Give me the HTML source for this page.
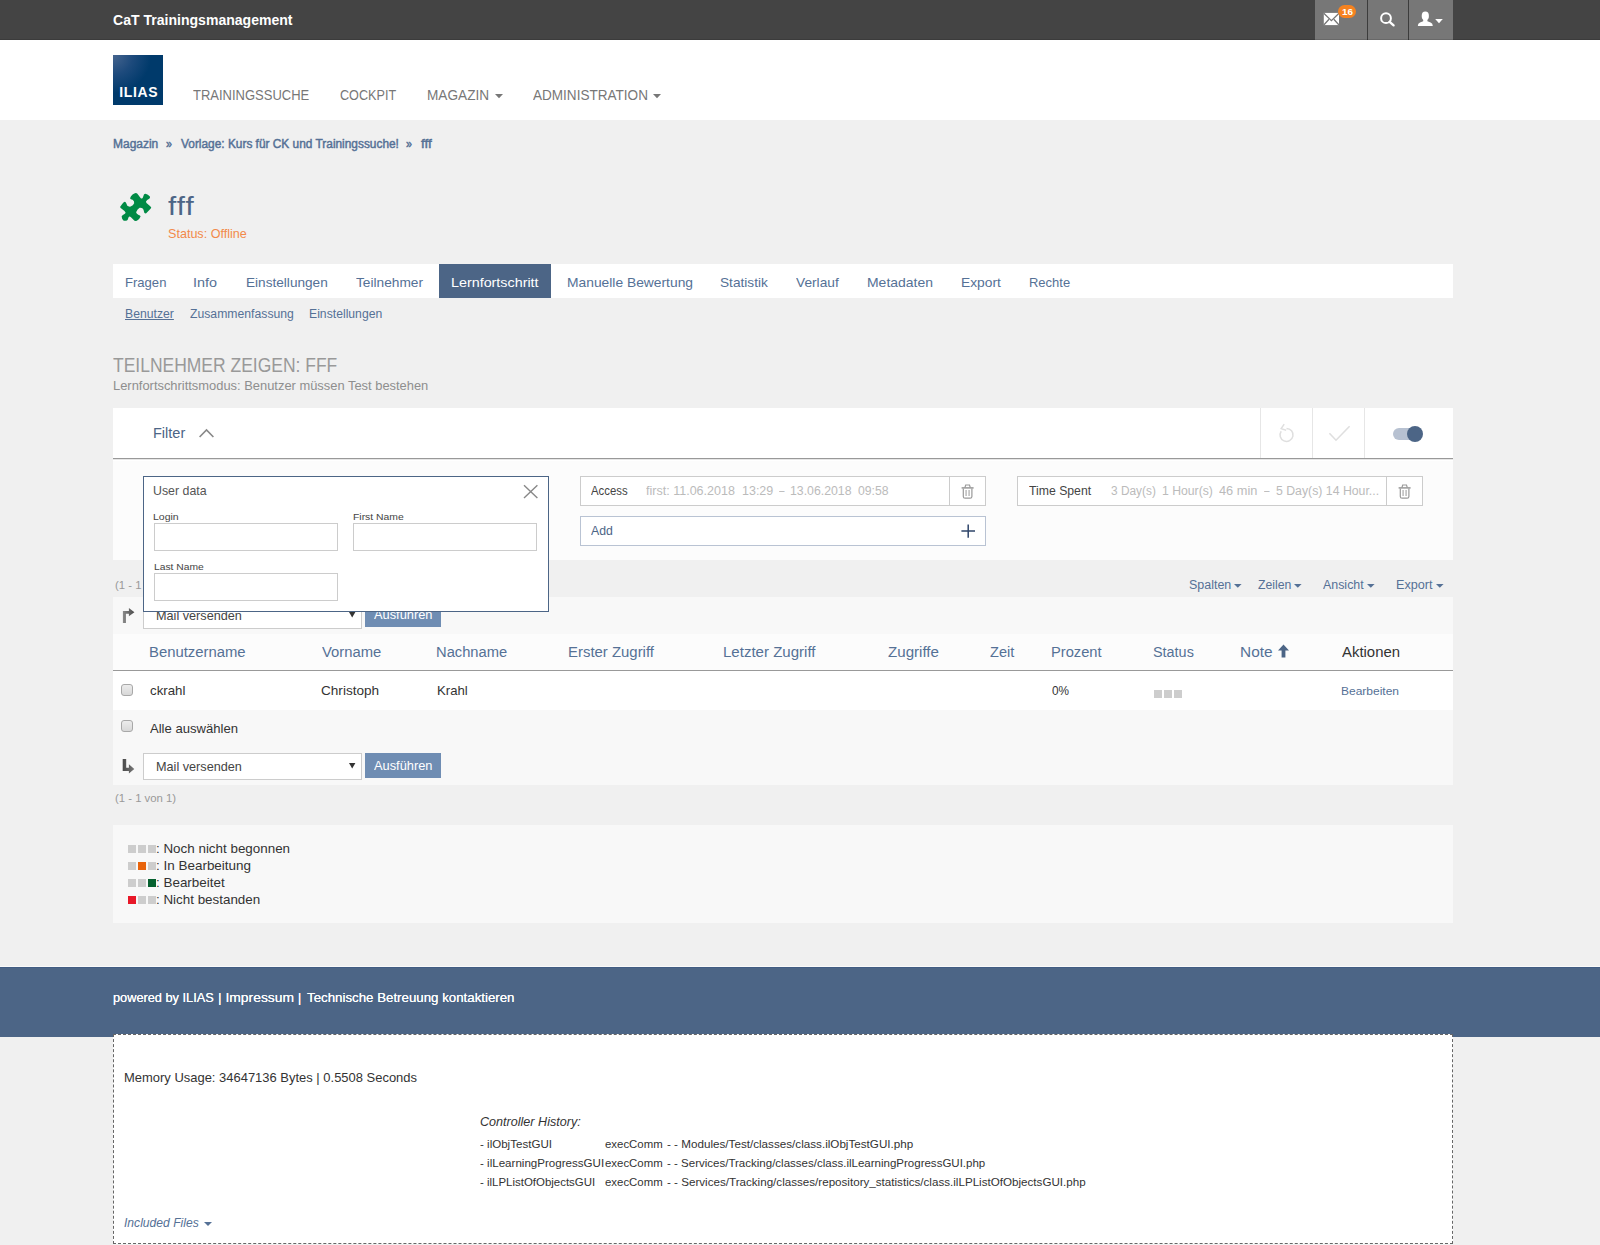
<!DOCTYPE html>
<html><head><meta charset="utf-8"><title>fff</title>
<style>
html,body{margin:0;padding:0;}
body{width:1600px;height:1245px;background:#f0f0f0;position:relative;overflow:hidden;font-family:"Liberation Sans",sans-serif;}
body>div,body>svg,body>span{position:absolute;box-sizing:border-box;}
body>span{white-space:pre;transform-origin:0 50%;z-index:1;line-height:30px;height:30px;}
</style></head><body>
<div style="left:0px;top:0px;width:1600px;height:40px;background:#444;"></div>
<div style="left:1315px;top:0px;width:138px;height:40px;background:#777;"></div>
<div style="left:1367px;top:0px;width:1px;height:40px;background:#3c3c3c;"></div>
<div style="left:1408px;top:0px;width:1px;height:40px;background:#3c3c3c;"></div>
<div style="left:0px;top:39px;width:1600px;height:1px;background:rgba(0,0,0,0.12);"></div>
<div style="left:0px;top:40px;width:1600px;height:80px;background:#fff;"></div>
<div style="left:113px;top:55px;width:50px;height:50px;background:radial-gradient(circle at 0% 0%, #46658f 0%, #1d4a7c 28%, #003a6b 54%);"></div>
<div style="left:113px;top:264px;width:1340px;height:34px;background:#fff;"></div>
<div style="left:439px;top:264px;width:112px;height:34px;background:#4c6586;"></div>
<div style="left:113px;top:408px;width:1340px;height:50px;background:#fff;"></div>
<div style="left:113px;top:458px;width:1340px;height:1px;background:#999;"></div>
<div style="left:113px;top:459px;width:1340px;height:101px;background:linear-gradient(#e6e6e6 0px,#e6e6e6 1px,#fff 1px,#fff 2px,#fcfcfc 2px);"></div>
<div style="left:1260px;top:408px;width:1px;height:50px;background:#e6e6e6;"></div>
<div style="left:1312px;top:408px;width:1px;height:50px;background:#e6e6e6;"></div>
<div style="left:1364px;top:408px;width:1px;height:50px;background:#e6e6e6;"></div>
<div style="left:580px;top:476px;width:406px;height:30px;background:#fff;border:1px solid #ccc;"></div>
<div style="left:949px;top:476px;width:1px;height:30px;background:#ccc;"></div>
<div style="left:580px;top:516px;width:406px;height:30px;background:#fff;border:1px solid #b9c3d3;"></div>
<div style="left:1017px;top:476px;width:406px;height:30px;background:#fff;border:1px solid #ccc;"></div>
<div style="left:1386px;top:476px;width:1px;height:30px;background:#ccc;"></div>
<div style="left:113px;top:597px;width:1340px;height:188px;background:#f8f8f8;"></div>
<div style="left:113px;top:634px;width:1340px;height:36px;background:#fcfcfc;"></div>
<div style="left:113px;top:670px;width:1340px;height:1px;background:#999;"></div>
<div style="left:113px;top:671px;width:1340px;height:39px;background:#fff;"></div>
<div style="left:143px;top:602px;width:219px;height:27px;background:#fff;border:1px solid #ccc;"></div>
<div style="left:365px;top:602px;width:76px;height:25px;background:#6f8db3;"></div>
<svg style="left:349px;top:612px;" width="7" height="6" viewBox="0 0 7 6"><path d="M0 0H6.4L3.2 5.6Z" fill="#333"/></svg>
<div style="left:143px;top:753px;width:219px;height:27px;background:#fff;border:1px solid #ccc;"></div>
<div style="left:365px;top:753px;width:76px;height:25px;background:#6f8db3;"></div>
<svg style="left:349px;top:763px;" width="7" height="6" viewBox="0 0 7 6"><path d="M0 0H6.4L3.2 5.6Z" fill="#333"/></svg>
<div style="left:113px;top:825px;width:1340px;height:98px;background:#f8f8f8;"></div>
<div style="left:0px;top:966px;width:1600px;height:1px;background:#fafafa;"></div>
<div style="left:0px;top:967px;width:1600px;height:70px;background:#4c6586;"></div>
<div style="left:0px;top:967px;width:1600px;height:1px;background:#415c83;"></div>
<div style="left:113px;top:1034px;width:1340px;height:210px;background:#fff;border:1px dashed #666;"></div>
<div style="left:143px;top:476px;width:406px;height:136px;background:#fff;border:1px solid #4c6586;z-index:2;"></div>
<div style="left:154px;top:523px;width:184px;height:28px;background:#fff;border:1px solid #ccc;z-index:3;"></div>
<div style="left:353px;top:523px;width:184px;height:28px;background:#fff;border:1px solid #ccc;z-index:3;"></div>
<div style="left:154px;top:573px;width:184px;height:28px;background:#fff;border:1px solid #ccc;z-index:3;"></div>
<div style="left:1154px;top:690px;width:8px;height:8px;background:#cdcdcd;"></div>
<div style="left:1164px;top:690px;width:8px;height:8px;background:#cdcdcd;"></div>
<div style="left:1174px;top:690px;width:8px;height:8px;background:#cdcdcd;"></div>
<div style="left:128px;top:845px;width:8px;height:8px;background:#cdcdcd;"></div>
<div style="left:138px;top:845px;width:8px;height:8px;background:#cdcdcd;"></div>
<div style="left:148px;top:845px;width:8px;height:8px;background:#cdcdcd;"></div>
<div style="left:128px;top:862px;width:8px;height:8px;background:#cdcdcd;"></div>
<div style="left:138px;top:862px;width:8px;height:8px;background:#e8640c;"></div>
<div style="left:148px;top:862px;width:8px;height:8px;background:#cdcdcd;"></div>
<div style="left:128px;top:879px;width:8px;height:8px;background:#cdcdcd;"></div>
<div style="left:138px;top:879px;width:8px;height:8px;background:#cdcdcd;"></div>
<div style="left:148px;top:879px;width:8px;height:8px;background:#06602f;"></div>
<div style="left:128px;top:896px;width:8px;height:8px;background:#e81828;"></div>
<div style="left:138px;top:896px;width:8px;height:8px;background:#cdcdcd;"></div>
<div style="left:148px;top:896px;width:8px;height:8px;background:#cdcdcd;"></div>
<svg style="left:112px;top:186px;" width="50" height="40" viewBox="0 0 1556 1245"><path d="M740 215 Q770 215 790 240 L895 385 Q920 400 955 370 L995 265 Q1010 240 1045 240 Q1120 255 1180 330 Q1195 380 1160 400 Q1080 430 1058 480 Q1060 530 1110 560 Q1180 610 1220 665 Q1220 690 1200 705 L1065 850 Q1035 865 1005 830 Q985 740 965 710 Q920 670 860 678 Q790 720 750 820 Q760 870 830 900 Q880 910 890 950 Q860 1030 775 1085 Q735 1095 700 1085 L590 970 Q545 930 520 965 L485 1055 Q440 1090 365 1082 Q300 1020 300 950 Q305 915 340 900 Q420 860 425 830 Q400 780 330 730 Q250 680 250 650 Q300 570 365 505 Q405 480 430 510 Q460 560 470 610 Q510 650 580 640 Q660 610 690 540 Q700 470 640 430 Q570 410 562 380 Q580 320 640 265 Q700 220 740 215 Z" fill="#008a45"/></svg>
<svg style="left:1323px;top:12px;" width="17" height="14" viewBox="0 0 17 14"><rect x="0.8" y="0.9" width="15.2" height="12.2" fill="#fff"/><path d="M0.8 1.2 L8.4 8.6 L16 1.2" fill="none" stroke="#777" stroke-width="1.3"/><path d="M0.8 13 L6 7.2 M16 13 L10.8 7.2" fill="none" stroke="#777" stroke-width="1.3"/></svg>
<div style="left:1338px;top:5px;width:18px;height:13px;background:#f58220;border-radius:6.5px;"></div>
<svg style="left:1379px;top:11px;" width="18" height="17" viewBox="0 0 18 17"><circle cx="7" cy="7.2" r="4.9" fill="none" stroke="#fff" stroke-width="2"/><path d="M10.6 10.8 L14.6 14.4" stroke="#fff" stroke-width="2.3" stroke-linecap="round"/></svg>
<svg style="left:1417px;top:11px;" width="17" height="16" viewBox="0 0 17 16"><ellipse cx="8.3" cy="5" rx="3.6" ry="4.4" fill="#fff"/><path d="M0.8 15 Q0.8 12.3 3 11.6 L6.2 10.2 L6.2 8 H10.4 V10.2 L13.6 11.6 Q15.8 12.3 15.8 15 Z" fill="#fff"/></svg>
<svg style="left:1435px;top:18.6px;" width="9" height="5" viewBox="0 0 9 5"><path d="M0.2 0H7.8L4 4.3Z" fill="#fff"/></svg>
<svg style="left:495.2px;top:94px;" width="9" height="5" viewBox="0 0 9 5"><path d="M0 0H8L4 4.2Z" fill="#777"/></svg>
<svg style="left:653px;top:94px;" width="9" height="5" viewBox="0 0 9 5"><path d="M0 0H8L4 4.2Z" fill="#777"/></svg>
<svg style="left:1234.25px;top:584.2px;" width="9" height="5" viewBox="0 0 9 5"><path d="M0 0H7.6L3.8 3.7Z" fill="#557196"/></svg>
<svg style="left:1294.25px;top:584.2px;" width="9" height="5" viewBox="0 0 9 5"><path d="M0 0H7.6L3.8 3.7Z" fill="#557196"/></svg>
<svg style="left:1367px;top:584.2px;" width="9" height="5" viewBox="0 0 9 5"><path d="M0 0H7.6L3.8 3.7Z" fill="#557196"/></svg>
<svg style="left:1435.5px;top:584.2px;" width="9" height="5" viewBox="0 0 9 5"><path d="M0 0H7.6L3.8 3.7Z" fill="#557196"/></svg>
<svg style="left:203.75px;top:1221.6px;" width="9" height="5" viewBox="0 0 9 5"><path d="M0 0H8L4 4Z" fill="#557196"/></svg>
<svg style="left:198px;top:427px;" width="18" height="13" viewBox="0 0 18 13"><path d="M1.6 10 L8.5 3 L15.4 10" fill="none" stroke="#888" stroke-width="1.6"/></svg>
<svg style="left:1276px;top:422px;" width="20" height="22" viewBox="0 0 20 22"><path d="M5.2 9.2 A6.5 6.5 0 1 0 10.5 6.4" fill="none" stroke="#dfdfdf" stroke-width="1.5"/><path d="M8.2 2.2 L5.2 6.6 L10.2 8.2" fill="none" stroke="#dfdfdf" stroke-width="1.5"/></svg>
<svg style="left:1327px;top:424px;" width="26" height="20" viewBox="0 0 26 20"><path d="M2.4 9.2 L9 16.2 L22.6 2.2" fill="none" stroke="#dfdfdf" stroke-width="1.6"/></svg>
<div style="left:1393px;top:428px;width:28px;height:12px;background:#b7c1d1;border-radius:6px;"></div>
<div style="left:1407px;top:426px;width:16px;height:16px;background:#4c6586;border-radius:8px;"></div>
<svg style="left:961px;top:484px;" width="14" height="16" viewBox="0 0 14 16"><path d="M0.6 3.9 H12.6" stroke="#999" stroke-width="1.5"/><path d="M3.9 3.6 L4.7 1 H8.5 L9.3 3.6" fill="none" stroke="#999" stroke-width="1.2"/><path d="M2.3 4.4 V12.4 Q2.3 14.2 4.1 14.2 H9.1 Q10.9 14.2 10.9 12.4 V4.4" fill="none" stroke="#999" stroke-width="1.2"/><path d="M5.1 6 V12 M8.1 6 V12" stroke="#bbb" stroke-width="1.5"/></svg>
<svg style="left:1398px;top:484px;" width="14" height="16" viewBox="0 0 14 16"><path d="M0.6 3.9 H12.6" stroke="#999" stroke-width="1.5"/><path d="M3.9 3.6 L4.7 1 H8.5 L9.3 3.6" fill="none" stroke="#999" stroke-width="1.2"/><path d="M2.3 4.4 V12.4 Q2.3 14.2 4.1 14.2 H9.1 Q10.9 14.2 10.9 12.4 V4.4" fill="none" stroke="#999" stroke-width="1.2"/><path d="M5.1 6 V12 M8.1 6 V12" stroke="#bbb" stroke-width="1.5"/></svg>
<svg style="left:961px;top:524px;" width="15" height="15" viewBox="0 0 15 15"><path d="M7.2 0.4 V13.8 M0.4 7.1 H14" stroke="#2f456a" stroke-width="1.5"/></svg>
<svg style="left:523px;top:484px;z-index:3;" width="16" height="16" viewBox="0 0 16 16"><path d="M1 1.2 L14.4 14 M14.4 1.2 L1 14" stroke="#888" stroke-width="1.4"/></svg>
<svg style="left:1277px;top:644px;" width="13" height="14" viewBox="0 0 13 14"><path d="M6.5 0.4 L12 6.6 H8.4 V13.4 H4.6 V6.6 H1 Z" fill="#4c6586"/></svg>
<svg style="left:122px;top:607px;" width="13" height="16" viewBox="0 0 13 16"><defs><linearGradient id="ga" x1="0" x2="1"><stop offset="0" stop-color="#8a8a8a"/><stop offset="1" stop-color="#4a4a4a"/></linearGradient></defs><path d="M0.9 15.9 V4.1 H6.9 V0.9 L12.4 5.3 L6.9 9.2 V6.7 H3.9 V15.9 Z" fill="url(#ga)"/></svg>
<svg style="left:122px;top:758px;" width="13" height="16" viewBox="0 0 13 16"><defs><linearGradient id="gb" x1="0" x2="1"><stop offset="0" stop-color="#4a4a4a"/><stop offset="1" stop-color="#777"/></linearGradient></defs><path d="M0.7 0.9 H4.2 V9.7 H6.9 V6.2 L12.3 10.9 L6.9 15.5 V12.9 H0.7 Z" fill="url(#gb)"/></svg>
<div style="left:121px;top:684px;width:12px;height:12px;background:linear-gradient(#ececec,#d8d8d8);border:1px solid #a8a8a8;border-radius:3px;"></div>
<div style="left:121px;top:720px;width:12px;height:12px;background:linear-gradient(#ececec,#d8d8d8);border:1px solid #a8a8a8;border-radius:3px;"></div>
<span style="left:112.59px;top:5.15px;font-size:14px;color:#fff;font-weight:bold;transform:scaleX(1.0034);">CaT Trainingsmanagement</span>
<span style="left:119.28px;top:77.15px;font-size:14px;color:#fff;font-weight:bold;transform:scaleX(1.0000);letter-spacing:0.610px;">ILIAS</span>
<span style="left:193.00px;top:80.15px;font-size:14px;color:#777;transform:scaleX(0.9280);">TRAININGSSUCHE</span>
<span style="left:339.77px;top:80.15px;font-size:14px;color:#777;transform:scaleX(0.9023);">COCKPIT</span>
<span style="left:426.61px;top:80.15px;font-size:14px;color:#777;transform:scaleX(0.9737);">MAGAZIN</span>
<span style="left:533.00px;top:80.15px;font-size:14px;color:#777;transform:scaleX(0.9678);">ADMINISTRATION</span>
<span style="left:112.59px;top:128.84px;font-size:12px;color:#557196;transform:scaleX(0.9980);-webkit-text-stroke:0.45px #557196;">Magazin</span>
<span style="left:165.50px;top:128.84px;font-size:12px;color:#557196;transform:scaleX(0.8898);-webkit-text-stroke:0.45px #557196;">»</span>
<span style="left:180.60px;top:128.84px;font-size:12px;color:#557196;transform:scaleX(0.9900);-webkit-text-stroke:0.45px #557196;">Vorlage: Kurs für CK und Trainingssuche!</span>
<span style="left:406.00px;top:128.84px;font-size:12px;color:#557196;transform:scaleX(0.8895);-webkit-text-stroke:0.45px #557196;">»</span>
<span style="left:420.50px;top:128.84px;font-size:12px;color:#557196;transform:scaleX(1.1171);-webkit-text-stroke:0.45px #557196;">fff</span>
<span style="left:168.00px;top:190.99px;font-size:26px;color:#4c6586;transform:scaleX(1.1400);letter-spacing:0.947px;">fff</span>
<span style="left:167.63px;top:218.50px;font-size:13px;color:#f28a4a;transform:scaleX(0.9676);">Status: Offline</span>
<span style="left:124.59px;top:267.50px;font-size:13px;color:#557196;transform:scaleX(1.0051);">Fragen</span>
<span style="left:193.35px;top:267.50px;font-size:13px;color:#557196;transform:scaleX(1.1065);">Info</span>
<span style="left:245.64px;top:267.50px;font-size:13px;color:#557196;transform:scaleX(1.0470);">Einstellungen</span>
<span style="left:355.50px;top:267.50px;font-size:13px;color:#557196;transform:scaleX(1.0547);">Teilnehmer</span>
<span style="left:567.03px;top:267.50px;font-size:13px;color:#557196;transform:scaleX(1.0633);">Manuelle Bewertung</span>
<span style="left:719.68px;top:267.50px;font-size:13px;color:#557196;transform:scaleX(1.0509);">Statistik</span>
<span style="left:796.25px;top:267.50px;font-size:13px;color:#557196;transform:scaleX(1.0549);">Verlauf</span>
<span style="left:867.02px;top:267.50px;font-size:13px;color:#557196;transform:scaleX(1.0734);">Metadaten</span>
<span style="left:960.69px;top:267.50px;font-size:13px;color:#557196;transform:scaleX(1.0608);">Export</span>
<span style="left:1029.09px;top:267.50px;font-size:13px;color:#557196;transform:scaleX(0.9979);">Rechte</span>
<span style="left:451.48px;top:267.50px;font-size:13px;color:#fff;transform:scaleX(1.1015);">Lernfortschritt</span>
<span style="left:124.66px;top:298.84px;font-size:12px;color:#557196;transform:scaleX(1.0178);text-decoration:underline;">Benutzer</span>
<span style="left:190.00px;top:298.84px;font-size:12px;color:#557196;transform:scaleX(1.0179);">Zusammenfassung</span>
<span style="left:309.08px;top:298.84px;font-size:12px;color:#557196;transform:scaleX(1.0169);">Einstellungen</span>
<span style="left:113.00px;top:350.24px;font-size:19.5px;color:#999;transform:scaleX(0.8960);">TEILNEHMER ZEIGEN: FFF</span>
<span style="left:112.60px;top:370.50px;font-size:13px;color:#8e8e8e;transform:scaleX(0.9924);">Lernfortschrittsmodus: Benutzer müssen Test bestehen</span>
<span style="left:152.59px;top:418.15px;font-size:14px;color:#4c6586;transform:scaleX(1.0376);">Filter</span>
<span style="left:115.06px;top:569.94px;font-size:11px;color:#999;transform:scaleX(1.0311);z-index:1;">(1 - 1 von 1)</span>
<span style="left:1189.04px;top:569.59px;font-size:12px;color:#557196;transform:scaleX(1.0390);">Spalten</span>
<span style="left:1257.50px;top:569.59px;font-size:12px;color:#557196;transform:scaleX(1.0220);">Zeilen</span>
<span style="left:1323.00px;top:569.59px;font-size:12px;color:#557196;transform:scaleX(1.0335);">Ansicht</span>
<span style="left:1395.63px;top:569.59px;font-size:12px;color:#557196;transform:scaleX(1.0532);">Export</span>
<span style="left:155.72px;top:600.75px;font-size:13px;color:#444;transform:scaleX(0.9736);z-index:1;">Mail versenden</span>
<span style="left:374.25px;top:600.00px;font-size:13px;color:#fff;transform:scaleX(0.9873);z-index:1;">Ausführen</span>
<span style="left:152.80px;top:475.50px;font-size:13px;color:#555;transform:scaleX(0.9509);z-index:3;">User data</span>
<span style="left:153.48px;top:501.71px;font-size:9.5px;color:#444;transform:scaleX(1.1051);z-index:3;">Login</span>
<span style="left:352.59px;top:501.71px;font-size:9.5px;color:#444;transform:scaleX(1.0915);z-index:3;">First Name</span>
<span style="left:153.51px;top:551.71px;font-size:9.5px;color:#444;transform:scaleX(1.0823);z-index:3;">Last Name</span>
<span style="left:590.50px;top:475.84px;font-size:12px;color:#444;transform:scaleX(0.9452);">Access</span>
<span style="left:646.25px;top:475.84px;font-size:12px;color:#bbb;transform:scaleX(1.0441);">first: 11.06.2018</span>
<span style="left:741.55px;top:475.84px;font-size:12px;color:#bbb;transform:scaleX(1.0415);">13:29</span>
<span style="left:778.75px;top:475.84px;font-size:12px;color:#bbb;transform:scaleX(0.8214);">–</span>
<span style="left:789.72px;top:475.84px;font-size:12px;color:#bbb;transform:scaleX(1.0238);">13.06.2018</span>
<span style="left:858.25px;top:475.84px;font-size:12px;color:#bbb;transform:scaleX(1.0167);">09:58</span>
<span style="left:590.50px;top:515.84px;font-size:12px;color:#4c6586;transform:scaleX(1.0238);">Add</span>
<span style="left:1028.75px;top:475.84px;font-size:12px;color:#444;transform:scaleX(1.0197);">Time Spent</span>
<span style="left:1110.99px;top:475.84px;font-size:12px;color:#bbb;transform:scaleX(0.9891);">3 Day(s)</span>
<span style="left:1162.06px;top:475.84px;font-size:12px;color:#bbb;transform:scaleX(1.0174);">1 Hour(s)</span>
<span style="left:1219.25px;top:475.84px;font-size:12px;color:#bbb;transform:scaleX(1.0660);">46 min</span>
<span style="left:1263.75px;top:475.84px;font-size:12px;color:#bbb;transform:scaleX(0.8214);">–</span>
<span style="left:1275.67px;top:475.84px;font-size:12px;color:#bbb;transform:scaleX(1.0233);">5 Day(s) 14 Hour...</span>
<span style="left:148.94px;top:636.90px;font-size:14px;color:#557196;transform:scaleX(1.0611);">Benutzername</span>
<span style="left:321.75px;top:636.90px;font-size:14px;color:#557196;transform:scaleX(1.0580);">Vorname</span>
<span style="left:435.94px;top:636.90px;font-size:14px;color:#557196;transform:scaleX(1.0516);">Nachname</span>
<span style="left:567.93px;top:636.90px;font-size:14px;color:#557196;transform:scaleX(1.0656);">Erster Zugriff</span>
<span style="left:722.67px;top:636.90px;font-size:14px;color:#557196;transform:scaleX(1.0742);">Letzter Zugriff</span>
<span style="left:887.50px;top:636.90px;font-size:14px;color:#557196;transform:scaleX(1.0798);">Zugriffe</span>
<span style="left:989.50px;top:636.90px;font-size:14px;color:#557196;transform:scaleX(1.0402);">Zeit</span>
<span style="left:1050.94px;top:636.90px;font-size:14px;color:#557196;transform:scaleX(1.0491);">Prozent</span>
<span style="left:1152.69px;top:636.90px;font-size:14px;color:#557196;transform:scaleX(1.0287);">Status</span>
<span style="left:1239.63px;top:636.90px;font-size:14px;color:#557196;transform:scaleX(1.1004);">Note</span>
<span style="left:1341.75px;top:636.90px;font-size:14px;color:#333;transform:scaleX(1.0648);">Aktionen</span>
<span style="left:150.00px;top:675.50px;font-size:13px;color:#333;transform:scaleX(1.0207);">ckrahl</span>
<span style="left:320.69px;top:675.50px;font-size:13px;color:#333;transform:scaleX(1.0446);">Christoph</span>
<span style="left:436.57px;top:675.50px;font-size:13px;color:#333;transform:scaleX(1.0107);">Krahl</span>
<span style="left:1052.00px;top:675.50px;font-size:13px;color:#333;transform:scaleX(0.9079);">0%</span>
<span style="left:1340.65px;top:676.19px;font-size:11px;color:#557196;transform:scaleX(1.0904);">Bearbeiten</span>
<span style="left:150.00px;top:713.50px;font-size:13px;color:#333;transform:scaleX(1.0057);">Alle auswählen</span>
<span style="left:155.72px;top:751.75px;font-size:13px;color:#444;transform:scaleX(0.9736);">Mail versenden</span>
<span style="left:374.25px;top:751.00px;font-size:13px;color:#fff;transform:scaleX(0.9873);">Ausführen</span>
<span style="left:115.06px;top:783.19px;font-size:11px;color:#999;transform:scaleX(1.0311);">(1 - 1 von 1)</span>
<span style="left:156.46px;top:833.75px;font-size:13px;color:#333;transform:scaleX(1.0305);">: Noch nicht begonnen</span>
<span style="left:156.46px;top:850.75px;font-size:13px;color:#333;transform:scaleX(1.0356);">: In Bearbeitung</span>
<span style="left:156.45px;top:867.75px;font-size:13px;color:#333;transform:scaleX(1.0325);">: Bearbeitet</span>
<span style="left:156.47px;top:884.75px;font-size:13px;color:#333;transform:scaleX(1.0300);">: Nicht bestanden</span>
<span style="left:112.61px;top:982.90px;font-size:13px;color:#fff;transform:scaleX(0.9813);text-shadow:0 0 0.6px #fff;">powered by ILIAS</span>
<span style="left:218.11px;top:982.90px;font-size:13px;color:#fff;transform:scaleX(1.0664);text-shadow:0 0 0.6px #fff;">| Impressum |</span>
<span style="left:307.00px;top:982.90px;font-size:13px;color:#fff;transform:scaleX(1.0218);text-shadow:0 0 0.6px #fff;">Technische Betreuung kontaktieren</span>
<span style="left:123.94px;top:1062.50px;font-size:13px;color:#333;transform:scaleX(0.9970);">Memory Usage: 34647136 Bytes | 0.5508 Seconds</span>
<span style="left:479.63px;top:1106.50px;font-size:13px;color:#333;font-style:italic;transform:scaleX(0.9680);">Controller History:</span>
<span style="left:479.58px;top:1129.02px;font-size:11.5px;color:#333;transform:scaleX(1.0052);">- ilObjTestGUI</span>
<span style="left:605.00px;top:1129.02px;font-size:11.5px;color:#333;transform:scaleX(0.9914);">execComm</span>
<span style="left:666.58px;top:1129.02px;font-size:11.5px;color:#333;transform:scaleX(1.0141);">- - Modules/Test/classes/class.ilObjTestGUI.php</span>
<span style="left:479.59px;top:1148.02px;font-size:11.5px;color:#333;transform:scaleX(1.0066);">- ilLearningProgressGUI</span>
<span style="left:605.00px;top:1148.02px;font-size:11.5px;color:#333;transform:scaleX(0.9914);">execComm</span>
<span style="left:666.60px;top:1148.02px;font-size:11.5px;color:#333;transform:scaleX(1.0013);">- - Services/Tracking/classes/class.ilLearningProgressGUI.php</span>
<span style="left:479.60px;top:1167.02px;font-size:11.5px;color:#333;transform:scaleX(0.9957);">- ilLPListOfObjectsGUI</span>
<span style="left:605.00px;top:1167.02px;font-size:11.5px;color:#333;transform:scaleX(0.9914);">execComm</span>
<span style="left:666.59px;top:1167.02px;font-size:11.5px;color:#333;transform:scaleX(1.0104);">- - Services/Tracking/classes/repository_statistics/class.ilLPListOfObjectsGUI.php</span>
<span style="left:124.06px;top:1207.50px;font-size:13px;color:#557196;font-style:italic;transform:scaleX(0.9318);">Included Files</span>
<span style="left:1342.2px;top:-2.9px;font-size:8.8px;font-weight:bold;color:#fff;transform:scaleX(1.12);">16</span>
</body></html>
